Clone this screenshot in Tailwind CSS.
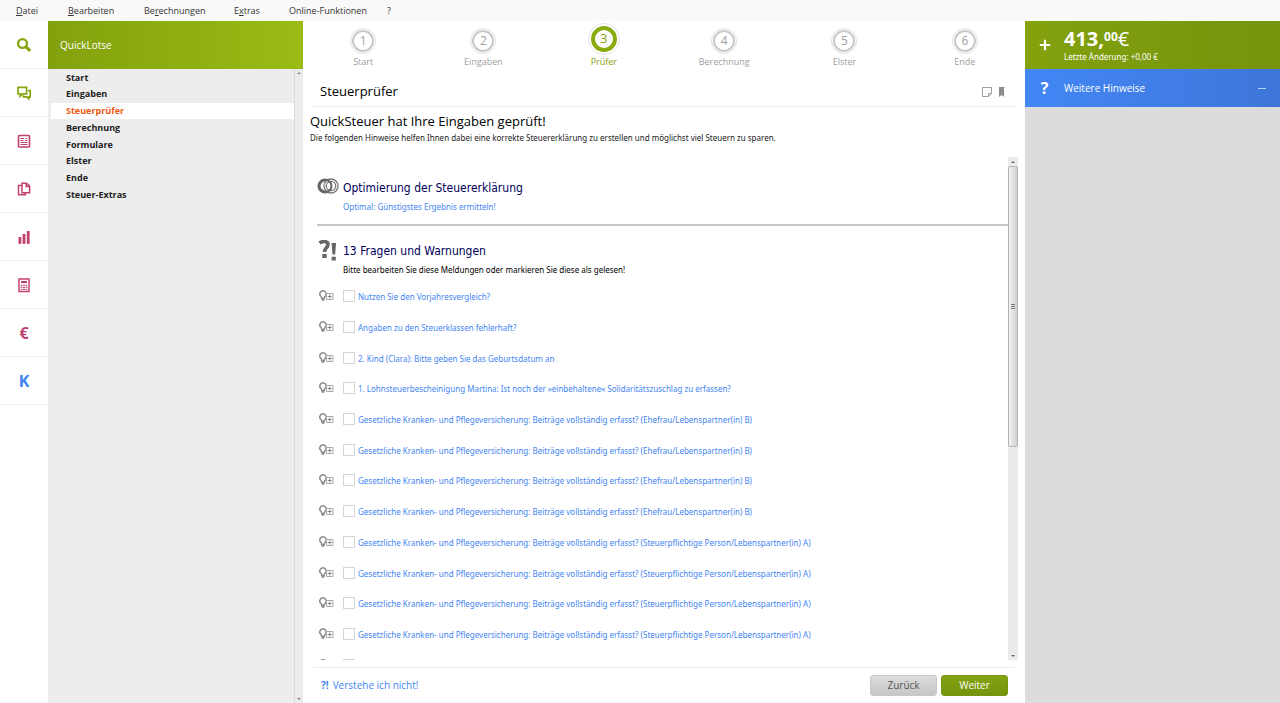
<!DOCTYPE html>
<html lang="de">
<head>
  <meta charset="UTF-8">
  <meta name="viewport" content="width=device-width, initial-scale=1.0">
  <title>QuickSteuer - Steuerprüfer</title>
  <script src="https://cdn.jsdelivr.net/npm/@tailwindcss/browser@4"></script>
</head>
<body class="h-screen flex flex-col overflow-hidden bg-white font-['Open_Sans','Noto_Sans',sans-serif] text-[#222]">

  <!-- Icons used more than once -->
  <svg class="hidden">
    <symbol id="hint" viewBox="0 0 15 12">
      <path d="M4 .8a3.2 3.2 0 0 0-2 5.7c.6.6.7 1 .7 1.9h2.600c0-.9.1-1.300.7-1.900A3.200 3.200 0 0 0 4 .8z" fill="none" stroke="#8a8a8a" stroke-width="1.500"/>
      <path d="M2.700 8.500h2.600v2.300h-2.600z" fill="#8a8a8a"/>
      <path d="M7.500 3.500h6.500v6H7.500z" fill="#fff" stroke="#aaa"/>
      <path d="M10.750 4.500v4M8.700 6.500h4.100" stroke="#888"/>
    </symbol>
  </svg>

  <!-- Menu bar -->
  <nav class="h-[21px] shrink-0 flex items-center bg-[#f9f9f9] text-[9px] text-[#333] pl-4">
    <a href="#" class="w-[52px]"><u>D</u>atei</a>
    <a href="#" class="w-[76px]"><u>B</u>earbeiten</a>
    <a href="#" class="w-[90px]">Be<u>r</u>echnungen</a>
    <a href="#" class="w-[55px]">E<u>x</u>tras</a>
    <a href="#" class="w-[98px]">Online-Funktionen</a>
    <a href="#">?</a>
  </nav>

  <div class="flex-1 min-h-0 flex">

    <!-- Icon rail -->
    <aside class="w-12 shrink-0 bg-white">
      <button aria-label="Suche" class="w-full h-12 flex items-center justify-center border-b border-[#f0f0f0]">
        <svg class="size-4" viewBox="0 0 16 16" fill="none" stroke="#86a60f"><circle cx="6.500" cy="6.500" r="4.400" stroke-width="2.400"/><path d="M9.700 9.700l4.500 4.200" stroke-width="3"/></svg>
      </button>
      <button aria-label="Nachrichten" class="w-full h-12 flex items-center justify-center border-b border-[#f0f0f0]">
        <svg class="size-4" viewBox="0 0 16 16" fill="none" stroke="#86a60f" stroke-width="1.700"><path d="M2 2.300h8.600v6.600H6.400L4.200 11.200V8.900H2z"/><path d="M12 5.600h2.200v6.300h-1.400v2l-2.200-2H7.400v-1.700"/></svg>
      </button>
      <button aria-label="Formular" class="w-full h-12 flex items-center justify-center border-b border-[#f0f0f0]">
        <svg class="size-4" viewBox="0 0 16 16" fill="none" stroke="#c0406f"><rect x="2.500" y="2.500" width="11" height="11.500" rx="1" stroke-width="1.600"/><path d="M4.500 5.500h3.500M4.500 7.500h3M9.500 5.500h2M9 7.500h2.500M4.500 9.500h7M4.500 11.500h7" stroke-width="1.200"/></svg>
      </button>
      <button aria-label="Dokumente" class="w-full h-12 flex items-center justify-center border-b border-[#f0f0f0]">
        <svg class="size-4" viewBox="0 0 16 16" fill="none" stroke="#c0406f" stroke-width="1.500"><path d="M6 4.500H2.500v9.300h6.800V12"/><path d="M6 2.200h4.500L13.600 5v6.700H6zM10.200 2.500v3h3"/></svg>
      </button>
      <button aria-label="Statistik" class="w-full h-12 flex items-center justify-center border-b border-[#f0f0f0]">
        <svg class="size-4" viewBox="0 0 16 16" fill="#c0406f"><rect x="2.500" y="8" width="2.800" height="6.800"/><rect x="6.600" y="5" width="2.800" height="9.800"/><rect x="10.800" y="2" width="2.800" height="12.800"/></svg>
      </button>
      <button aria-label="Rechner" class="w-full h-12 flex items-center justify-center border-b border-[#f0f0f0]">
        <svg class="size-4" viewBox="0 0 16 16" fill="none" stroke="#c0406f"><rect x="3" y="2" width="10" height="12.500" stroke-width="1.500"/><path d="M5 5h6" stroke-width="2"/><path d="M4.800 8.300h6.400M4.800 10.300h6.400M4.800 12.300h6.400" stroke-width="1.200" stroke-dasharray="1.600 .8"/></svg>
      </button>
      <button class="w-full h-12 border-b border-[#f0f0f0] text-base font-bold text-[#c0406f]">€</button>
      <button class="w-full h-12 border-b border-[#f0f0f0] text-base font-bold text-[#3f85f4]">K</button>
    </aside>

    <!-- QuickLotse navigation -->
    <section class="w-[255px] shrink-0 flex flex-col bg-[#ededed]">
      <h2 class="h-12 shrink-0 flex items-center pl-3 text-[10px] text-white bg-linear-to-r from-[#82a10d] to-[#9abb14]">QuickLotse</h2>
      <div class="flex-1 flex">
        <ul class="flex-1 h-[134px] pl-[3px] grid auto-rows-fr text-[9px] font-bold text-[#222]">
          <li class="flex items-center pl-[15px]"><a href="#">Start</a></li>
          <li class="flex items-center pl-[15px]"><a href="#">Eingaben</a></li>
          <li class="flex items-center pl-[15px] bg-white text-[#ee5a14]"><a href="#">Steuerprüfer</a></li>
          <li class="flex items-center pl-[15px]"><a href="#">Berechnung</a></li>
          <li class="flex items-center pl-[15px]"><a href="#">Formulare</a></li>
          <li class="flex items-center pl-[15px]"><a href="#">Elster</a></li>
          <li class="flex items-center pl-[15px]"><a href="#">Ende</a></li>
          <li class="flex items-center pl-[15px]"><a href="#">Steuer-Extras</a></li>
        </ul>
        <div class="w-[9px] flex flex-col items-center justify-between py-[3px] bg-[#ebebeb] border-l border-[#dcdcdc]">
          <svg class="w-1 h-[2px]" viewBox="0 0 4 2"><path d="M0 2l2-2 2 2z" fill="#888"/></svg>
          <svg class="w-1 h-[2px]" viewBox="0 0 4 2"><path d="M0 0l2 2 2-2z" fill="#888"/></svg>
        </div>
      </div>
    </section>

    <!-- Main area -->
    <main class="flex-1 min-w-0 flex flex-col">
      <ol id="steps" class="h-12 shrink-0 grid grid-cols-6 text-[9px] text-[#a0a0a0]"></ol>

      <header class="h-[38px] mx-[10px] shrink-0 flex items-center justify-between pl-[7px] pr-[7px] border-b border-[#ececec]">
        <h1 class="text-[13px] text-black pt-2">Steuerprüfer</h1>
        <div class="flex gap-[3px] pt-2">
          <button aria-label="Notiz"><svg class="w-3 h-3" viewBox="0 0 12 12" fill="none" stroke="#a0a0a0"><path d="M1.500 1.500h9v6L7.500 10.500h-6zM10.500 7.500h-3v3"/></svg></button>
          <button aria-label="Lesezeichen"><svg class="w-3 h-3" viewBox="0 0 12 12"><path d="M3 1h6l-1 1v9L5.700 9 3 11z" fill="#8d8d8d"/></svg></button>
        </div>
      </header>

      <div class="shrink-0 h-[50px] pl-[7px] pt-1">
        <h2 class="text-[13px] leading-5 text-black">QuickSteuer hat Ihre Eingaben geprüft!</h2>
        <p class="font-['Noto_Sans','Open_Sans',sans-serif] text-[8px] leading-[14px]">Die folgenden Hinweise helfen Ihnen dabei eine korrekte Steuererklärung zu erstellen und möglichst viel Steuern zu sparen.</p>
      </div>

      <div class="flex-1 min-h-0 flex pl-[14px] pr-[7px] font-['Noto_Sans','Open_Sans',sans-serif]">
        <div class="flex-1 min-w-0 overflow-hidden">
          <section class="h-[69px] pt-5 flex gap-1 border-b-2 border-[#c8c8c8]">
            <svg class="w-[22px] h-[18px] shrink-0" viewBox="0 0 22 18" fill="none"><circle cx="8" cy="9" r="6" stroke="#666" stroke-width="3.200"/><circle cx="14" cy="9" r="7" fill="#fff" stroke="#777" stroke-width="1.300"/><circle cx="14" cy="9" r="4.700" stroke="#777" stroke-width="1.300"/><path d="M8.500 3a6 6 0 0 1 0 12" stroke="#666" stroke-width="2"/></svg>
            <div>
              <h3 class="font-['DejaVu_Sans_Condensed','DejaVu_Sans',sans-serif] text-[12px] leading-[22px] text-[#00005a]">Optimierung der Steuererklärung</h3>
              <a href="#" class="block text-[8px] leading-4 text-[#3f85f4]">Optimal: Günstigstes Ergebnis ermitteln!</a>
            </div>
          </section>
          <section class="h-[55px] pt-[14px] flex gap-1">
            <svg class="w-[22px] h-6 shrink-0" viewBox="0 0 22 24" fill="none"><path d="M2.500 3C7 .2 11.300 1.600 10.900 5 10.500 8 7.500 7.800 7.500 12" stroke="#666" stroke-width="3.600"/><path d="M5.300 14h4.400v4H5.300zM14.500 3h4.600l-1 11.500h-2.600zM14.600 16.700h4.200V20.500h-4.200z" fill="#666"/></svg>
            <div>
              <h3 class="font-['DejaVu_Sans_Condensed','DejaVu_Sans',sans-serif] text-[12px] leading-[22px] text-[#00005a]">13 Fragen und Warnungen</h3>
              <p class="text-[8px] leading-4 text-black">Bitte bearbeiten Sie diese Meldungen oder markieren Sie diese als gelesen!</p>
            </div>
          </section>
          <ul id="hints" class="h-[399px] grid auto-rows-fr text-[8px] text-[#3f85f4]"></ul>
        </div>

        <!-- Scroll bar -->
        <div class="w-[10px] shrink-0 flex flex-col items-center bg-[#ebebeb]">
          <div class="w-full h-[9px] flex items-center justify-center"><svg class="w-1 h-[2px]" viewBox="0 0 4 2"><path d="M0 2l2-2 2 2z" fill="#666"/></svg></div>
          <div class="w-full h-[281px] flex flex-col items-center justify-center gap-px rounded-xs border border-[#b4b4b4] bg-linear-to-r from-[#f4f4f4] to-[#d0d0d0]">
            <i class="w-1 h-px bg-[#777]"></i><i class="w-1 h-px bg-[#777]"></i><i class="w-1 h-px bg-[#777]"></i>
          </div>
          <div class="mt-auto w-full h-[9px] flex items-center justify-center"><svg class="w-1 h-[2px]" viewBox="0 0 4 2"><path d="M0 0l2 2 2-2z" fill="#666"/></svg></div>
        </div>
      </div>

      <footer class="h-9 mt-[7px] mx-[10px] shrink-0 flex items-center gap-1 pl-2 pr-[7px] border-t border-[#ececec] text-[10px]">
        <a href="#" class="mr-auto flex gap-1 text-[#3f85f4]"><b>?!</b> Verstehe ich nicht!</a>
        <button class="w-[67px] h-[21px] rounded-[3px] text-[#555] border border-[#c8c8c8] bg-linear-to-b from-[#dcdcdc] to-[#c6c6c6]">Zurück</button>
        <button class="w-[67px] h-[21px] rounded-[3px] text-white border border-[#779510] bg-linear-to-b from-[#84a310] to-[#75930e]">Weiter</button>
      </footer>
    </main>

    <!-- Refund and notes -->
    <aside class="w-[255px] shrink-0 bg-[#dcdcdc] text-white">
      <div class="h-12 flex items-center bg-linear-to-r from-[#83a20d] to-[#75930d]">
        <span class="w-[39px] flex justify-center"><svg class="size-3" viewBox="0 0 12 12" stroke="#fff" stroke-width="2.200"><path d="M6 .8v10.400M.8 6h10.400"/></svg></span>
        <div>
          <p class="flex text-[20px] leading-6 font-bold">413,<span class="text-[12px] leading-5">00</span><span class="font-normal">€</span></p>
          <p class="font-['Noto_Sans','Open_Sans',sans-serif] text-[8px] leading-3">Letzte Änderung: +0,00 €</p>
        </div>
      </div>
      <div class="h-[38px] flex items-center pr-[14px] text-[10px] bg-linear-to-r from-[#4287f7] to-[#3e76d8]">
        <b class="w-[39px] text-center text-base">?</b>
        <h2>Weitere Hinweise</h2>
        <button aria-label="Einklappen" class="ml-auto"><svg class="w-2 h-2" viewBox="0 0 8 8"><path d="M0 4.500h8" stroke="#b9d0f8"/></svg></button>
      </div>
    </aside>
  </div>

  <script>
    const steps = ['Start', 'Eingaben', 'Prüfer', 'Berechnung', 'Elster', 'Ende'];
    const current = 2;

    const care = 'Gesetzliche Kranken- und Pflegeversicherung: Beiträge vollständig erfasst? ';
    const partnerB = care + '(Ehefrau/Lebenspartner(in) B)';
    const partnerA = care + '(Steuerpflichtige Person/Lebenspartner(in) A)';
    const hints = [
      'Nutzen Sie den Vorjahresvergleich?',
      'Angaben zu den Steuerklassen fehlerhaft?',
      '2. Kind (Clara): Bitte geben Sie das Geburtsdatum an',
      '1. Lohnsteuerbescheinigung Martina: Ist noch der »einbehaltene« Solidaritätszuschlag zu erfassen?',
      partnerB, partnerB, partnerB, partnerB,
      partnerA, partnerA, partnerA, partnerA, partnerA
    ];

    // Wizard steps
    document.getElementById('steps').innerHTML = steps.map((name, i) => `
      <li class="flex flex-col items-center ${i === current ? 'text-[#86a60f]' : ''}">
        <div class="h-9 flex items-center">
          ${i === current
            ? '<span class="size-8 rounded-full border border-[#e2e2e2] p-[2px]"><span class="size-full rounded-full border-4 border-[#8aab0e] flex items-center justify-center text-[13px]">3</span></span>'
            : `<span class="size-[26px] mt-1 rounded-full border border-[#e2e2e2] p-px"><span class="size-full rounded-full border-2 border-[#c9c9c9] flex items-center justify-center text-[12px]">${i + 1}</span></span>`}
        </div>
        <span class="leading-[10px]">${name}</span>
      </li>
    `).join('');

    // Questions and warnings
    document.getElementById('hints').innerHTML = hints.map((text, i) => `
      <li class="flex items-center pl-[2px]">
        <svg class="w-[15px] h-3 shrink-0"><use href="#hint"/></svg>
        <input id="hint-${i}" type="checkbox" aria-label="Als gelesen markieren" class="appearance-none size-3 shrink-0 ml-[9px] mr-[3px] border border-[#d5d5d5] bg-white">
        <label for="hint-${i}" class="pt-[2px]"><a href="#" class="whitespace-nowrap">${text}</a></label>
      </li>
    `).join('');
  </script>
</body>
</html>
